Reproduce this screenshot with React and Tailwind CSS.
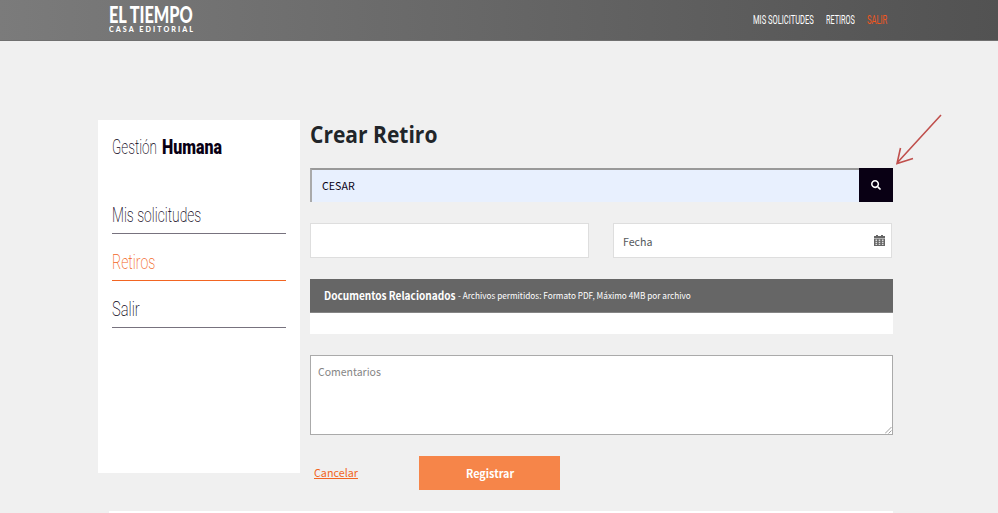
import React, { useLayoutEffect, useRef } from "react";
import { FaSearch } from "react-icons/fa";

// Renders a line of text condensed or widened to the given width.
function Fit({ w, className = "", children }) {
  const ref = useRef(null);
  useLayoutEffect(() => {
    const fit = () => {
      if (ref.current) ref.current.style.transform = `scaleX(${w / ref.current.offsetWidth})`;
    };
    fit();
    document.fonts.ready.then(fit);
  }, [w]);
  return (
    <span className="block" style={{ width: w }}>
      <span ref={ref} className={"inline-block origin-left align-top whitespace-nowrap " + className}>
        {children}
      </span>
    </span>
  );
}

const sans = "font-['Noto_Sans_CJK_SC',sans-serif]";

function MenuItem({ label, w, className }) {
  return (
    <a className={"flex h-[47px] items-start border-b font-['Roboto',sans-serif] font-extralight text-[21px] leading-[24px] pt-[16px] " + className}>
      <Fit w={w}>{label}</Fit>
    </a>
  );
}

function Header() {
  return (
    <header className="flex h-[41px] justify-between border-b border-[#707070] bg-linear-to-r from-[#7b7b7b] to-[#525252] pl-[109px] pr-[111px] text-white">
      <div className="flex flex-col pt-[7px]">
        <Fit w={84} className="font-['Lato',sans-serif] text-[22.5px] leading-[16px] font-black">EL TIEMPO</Fit>
        <Fit w={86} className="pt-[2px] font-['Lato',sans-serif] text-[7px] leading-[8px] font-black tracking-[2px]">CASA EDITORIAL</Fit>
      </div>
      <nav className="flex gap-[12px] pt-[12px] font-['Roboto',sans-serif] text-[12.5px] leading-[16px]">
        <Fit w={61}>MIS SOLICITUDES</Fit>
        <Fit w={29}>RETIROS</Fit>
        <Fit w={20} className="text-[#f2561d]">SALIR</Fit>
      </nav>
    </header>
  );
}

export default function App() {
  return (
    <div className={"relative flex h-[513px] flex-col overflow-hidden bg-[#f0f0f0] text-[#090014] leading-none " + sans}>
      <Header />
      <div className="flex h-[470px] pt-[79px] pl-[98px]">
        <aside className="h-[353px] w-[202px] bg-white px-[14px] pt-[15px]">
          <div className="flex gap-[5px] font-['Roboto',sans-serif] text-[21px] leading-[24px]">
            <Fit w={45} className="font-extralight">Gestión</Fit>
            <Fit w={60} className="font-black">Humana</Fit>
          </div>
          <div className="mt-[28px] w-[174px]">
            <MenuItem label="Mis solicitudes" w={89} className="border-[#77727e]" />
            <MenuItem label="Retiros" w={43} className="border-[#f26522] text-[#f26522]" />
            <MenuItem label="Salir" w={28} className="border-[#77727e]" />
          </div>
        </aside>
        <main className="ml-[10px] w-[583px]">
          <h1 className="h-[48px] pt-px text-[#212529]">
            <Fit w={127} className="font-['Open_Sans',sans-serif] text-[22.5px] leading-[28px] font-bold">Crear Retiro</Fit>
          </h1>
          <div className="flex h-[34px]">
            <div className="flex flex-1 items-start border-t-2 border-l-2 border-t-[#999] border-l-[#aaa] bg-[#e8f0fe] pt-[6px] pl-[10px]">
              <Fit w={33} className="text-[11px] leading-[18px]">CESAR</Fit>
            </div>
            <button className="flex w-[34px] items-center justify-center bg-[#090014] text-white">
              <FaSearch className="size-[10px]" />
            </button>
          </div>
          <div className="mt-[21px] flex h-[35px] gap-[24px]">
            <div className="w-[279px] border border-[#dedede] bg-white" />
            <div className="flex w-[279px] items-center justify-between border border-[#dedede] bg-white pr-[6px] pl-[9px] text-[#55585c]">
              <Fit w={29} className="text-[11px] leading-[18px]">Fecha</Fit>
              <svg className="size-[11px]" viewBox="0 0 11 11" fill="#666">
                <path d="M2 0h2v1h3V0h2v1h2v2H0V1h2zM0 3.5h11V11H0z" />
                <path d="M1.5 4.5h1.6V6H1.5zm3.2 0h1.6V6H4.7zm3.2 0h1.6V6H7.9zM1.5 6.8h1.6v1.4H1.5zm3.2 0h1.6v1.4H4.7zm3.2 0h1.6v1.4H7.9zM1.5 9h1.6v1H1.5zm3.2 0h1.6v1H4.7zm3.2 0h1.6v1H7.9z" fill="#ddd" />
              </svg>
            </div>
          </div>
          <section className="mt-[21px] h-[55px] bg-white">
            <div className="flex h-[34px] items-start gap-[3px] border-b border-[#858585] bg-[#666] pt-[7px] pl-[14px] text-white">
              <Fit w={131} className="text-[11px] leading-[18px] font-bold">Documentos Relacionados</Fit>
              <Fit w={233} className="text-[8.5px] leading-[18px]">- Archivos permitidos: Formato PDF, Máximo 4MB por archivo</Fit>
            </div>
          </section>
          <div className="mt-[21px] flex h-[80px] justify-between border border-[#aaa] bg-white pl-[7px] text-[#858585]">
            <Fit w={63} className="pt-[6px] text-[11px] leading-[18px]">Comentarios</Fit>
            <svg className="size-[7px] self-end" viewBox="0 0 7 7" stroke="#888" strokeWidth=".8">
              <path d="M0 6.5 6.5 0M3.5 6.5l3-3" />
            </svg>
          </div>
          <div className="mt-[21px] flex h-[34px] items-start pl-[4px]">
            <a className="w-[105px] pt-[7px] text-[#f26522]">
              <Fit w={44} className="text-[11px] leading-[18px] underline">Cancelar</Fit>
            </a>
            <button className="flex h-[34px] w-[141px] items-start justify-center bg-[#f68549] pt-[8px] text-white">
              <Fit w={48} className="text-[11px] leading-[18px] font-bold">Registrar</Fit>
            </button>
          </div>
        </main>
      </div>
      <footer className="ml-[109px] h-[2px] w-[784px] bg-white" />
      <svg className="absolute top-[112px] left-[892px] h-[56px] w-[54px]" viewBox="0 0 54 56" fill="none" stroke="#c0504d" strokeWidth="1.6">
        <path d="M49 3 5 51M8.500 36 5 51.500 21 46.500" />
      </svg>
    </div>
  );
}
